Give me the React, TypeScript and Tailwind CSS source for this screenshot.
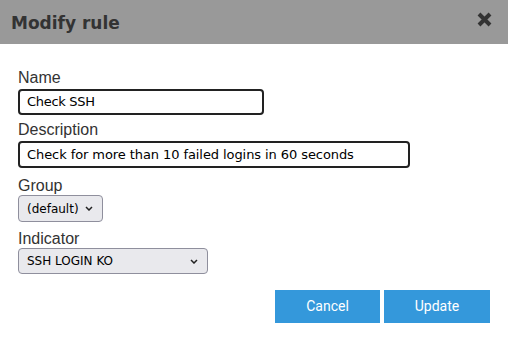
import React from "react";

const inputFont = { fontFamily: '"DejaVu Sans", sans-serif' };

function Chevron() {
  return (
    <svg width="8" height="5" viewBox="0 0 8 5" className="shrink-0">
      <path d="M1 1 L4 4 L7 1" fill="none" stroke="#222" strokeWidth="1.5" />
    </svg>
  );
}

export default function App() {
  return (
    <div className="w-[508px] h-[339px] bg-white overflow-hidden flex flex-col" style={{ fontFamily: '"Liberation Sans", Arial, sans-serif' }}>
      <div className="h-[44px] bg-[#999999] flex items-center justify-between pl-[11px] pr-[16px] shrink-0">
        <div className="text-[17px] font-bold text-[#333333] leading-none pt-[2px]" style={{ fontFamily: '"DejaVu Sans", sans-serif' }}>
          Modify rule
        </div>
        <svg width="15" height="15" viewBox="0 0 15 15" className="mt-[-5px]">
          <path d="M2 2 L13 13 M13 2 L2 13" stroke="#333333" strokeWidth="4" strokeLinecap="butt" />
        </svg>
      </div>
      <div className="flex flex-col pl-[18px] pr-[18px] pt-[25px] text-[#333333]">
        <label className="text-[16px] leading-[18px]">Name</label>
        <div className="mt-[2px] w-[246px] h-[26px] border-2 border-[#222222] rounded-[4px] flex items-center pl-[7px] text-[13px] text-black tracking-[-0.3px]" style={inputFont}>
          Check SSH
        </div>
        <label className="mt-[6px] text-[16px] leading-[18px]">Description</label>
        <div className="mt-[2px] w-[392px] h-[27px] border-2 border-[#222222] rounded-[4px] flex items-center pl-[7px] text-[13px] text-black tracking-[-0.08px]" style={inputFont}>
          Check for more than 10 failed logins in 60 seconds
        </div>
        <label className="mt-[9px] text-[16px] leading-[18px]">Group</label>
        <div className="mt-[0px] w-[85px] h-[27px] border border-[#8f8f9d] bg-[#e9e9ed] rounded-[4px] flex items-center justify-between pl-[8px] pr-[9px] text-[12px] text-black" style={inputFont}>
          <span>(default)</span>
          <Chevron />
        </div>
        <label className="mt-[8px] text-[16px] leading-[18px]">Indicator</label>
        <div className="mt-[0px] w-[190px] h-[26px] border border-[#8f8f9d] bg-[#e9e9ed] rounded-[4px] flex items-center justify-between pl-[8px] pr-[9px] text-[12px] text-black" style={inputFont}>
          <span>SSH LOGIN KO</span>
          <Chevron />
        </div>
        <div className="mt-[16px] flex justify-end gap-[4px]">
          <button className="w-[105px] h-[33px] bg-[#3498db] text-white text-[14px]" style={{ fontFamily: 'Roboto, sans-serif' }}>Cancel</button>
          <button className="w-[106px] h-[33px] bg-[#3498db] text-white text-[14px]" style={{ fontFamily: 'Roboto, sans-serif' }}>Update</button>
        </div>
      </div>
    </div>
  );
}
